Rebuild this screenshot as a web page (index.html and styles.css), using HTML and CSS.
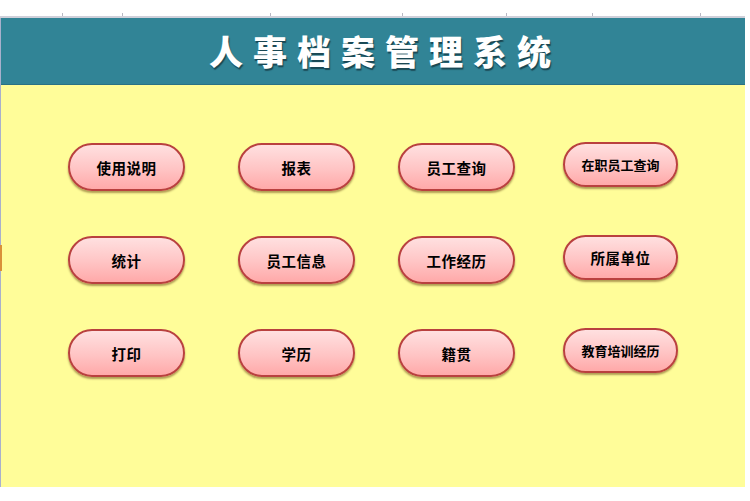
FILE: index.html
```html
<!DOCTYPE html>
<html lang="zh-CN">
<head>
<meta charset="utf-8">
<title>人事档案管理系统</title>
<link rel="stylesheet" href="styles.css">
</head>
<body>
<div class="ruler">
  <span class="tick t1"></span><span class="tick t2"></span><span class="tick t3"></span><span class="tick t4"></span><span class="tick t5"></span><span class="tick t6"></span><span class="tick t7"></span>
</div>
<div class="app">
  <header class="header"><h1 class="title">人事档案管理系统</h1></header>
  <main class="board">
    <span class="edge-mark"></span>
    <div class="grid">
      <div class="btn">使用说明</div>
      <div class="btn">报表</div>
      <div class="btn">员工查询</div>
      <div class="btn small">在职员工查询</div>
      <div class="btn">统计</div>
      <div class="btn">员工信息</div>
      <div class="btn">工作经历</div>
      <div class="btn">所属单位</div>
      <div class="btn">打印</div>
      <div class="btn">学历</div>
      <div class="btn">籍贯</div>
      <div class="btn small">教育培训经历</div>
    </div>
  </main>
</div>
</body>
</html>
```
FILE: styles.css
```css
html, body {
  margin: 0;
  padding: 0;
  background: #ffffff;
}
body {
  width: 750px;
  height: 501px;
  overflow: hidden;
  font-family: "Noto Sans CJK SC", "Noto Sans", sans-serif;
}
.ruler {
  height: 16px;
  width: 745px;
  border-bottom: 2px solid #cfd0da;
  position: relative;
}
.tick {
  position: absolute;
  bottom: 0;
  width: 1px;
  height: 3px;
  background: #b8b8c4;
}
.t1 { left: 62px; }
.t2 { left: 122px; }
.t3 { left: 270px; }
.t4 { left: 402px; }
.t5 { left: 506px; }
.t6 { left: 592px; }
.t7 { left: 700px; }
.app {
  width: 744px;
  border-left: 1px solid #a9b0cc;
}
.header {
  height: 67px;
  background: #318496;
  border-bottom: 1px solid #2a7184;
  box-sizing: border-box;
  display: flex;
  align-items: center;
  justify-content: center;
}
.title {
  margin: 0 0 0 24px;
  color: #ffffff;
  font-size: 34px;
  font-weight: 900;
  letter-spacing: 10px;
  line-height: 1;
  text-shadow: 1px 2px 1px #1a4753;
}
.board {
  height: 402px;
  background: #fffd99;
  box-sizing: border-box;
  padding: 58px 0 0 67px;
  position: relative;
}
.edge-mark {
  position: absolute;
  left: -1px;
  top: 160px;
  width: 2px;
  height: 26px;
  background: #d9913a;
}
.grid {
  display: grid;
  grid-template-columns: 170px 160px 165px 117px;
  grid-auto-rows: 48px;
  row-gap: 45px;
}
.btn {
  width: 117px;
  height: 48px;
  box-sizing: border-box;
  border: 2px solid #b9413f;
  border-radius: 24px;
  background: linear-gradient(#ffe0e0, #ffc4c4 55%, #ffa9a9);
  box-shadow: 0 2px 2px rgba(80, 40, 0, 0.45);
  display: flex;
  align-items: center;
  justify-content: center;
  font-size: 14.5px;
  font-weight: 700;
  color: #000000;
  letter-spacing: 0.5px;
}
.grid .btn:nth-child(4n) {
  width: 115px;
  height: 45px;
  margin-top: -1px;
}
.btn.small {
  font-size: 13px;
  letter-spacing: 0;
}
```
